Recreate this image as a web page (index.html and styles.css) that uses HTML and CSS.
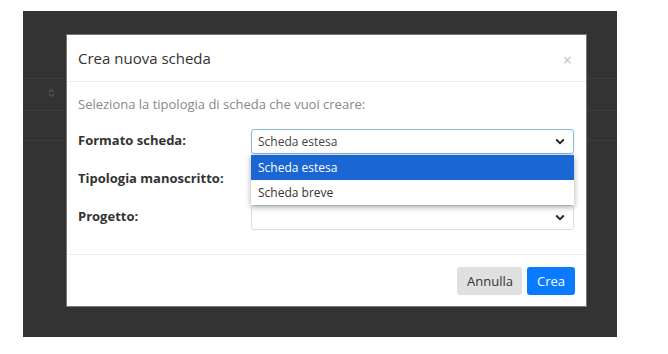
FILE: index.html
```html
<!DOCTYPE html>
<html lang="it">
<head>
    <meta charset="UTF-8">
    <meta name="viewport" content="width=device-width, initial-scale=1.0">
    <title>Crea nuova scheda</title>
    <link rel="stylesheet" href="styles.css">
</head>
<body>
    <div class="screen">
        <!-- Page behind the backdrop -->
        <div class="page">
            <div class="page-top"></div>
            <div class="page-row">
                <span class="sort-icon">
                    <svg width="7" height="10" viewBox="0 0 7 10"><path d="M1 4 L3.5 1.5 L6 4 M1 6 L3.5 8.5 L6 6" fill="none" stroke="#555" stroke-width="1.2"/></svg>
                </span>
            </div>
            <div class="page-row short"></div>
        </div>

        <!-- Modal -->
        <div class="modal">
            <div class="modal-header">
                <h4 class="modal-title">Crea nuova scheda</h4>
                <span class="close">&times;</span>
            </div>
            <div class="modal-body">
                <p class="hint">Seleziona la tipologia di scheda che vuoi creare:</p>

                <div class="form-row">
                    <label>Formato scheda:</label>
                    <div class="field">
                        <div class="select focused">
                            <span>Scheda estesa</span>
                            <svg class="chevron" width="10" height="7" viewBox="0 0 10 7"><path d="M1.2 1.5 L5 5.2 L8.8 1.5" fill="none" stroke="#222" stroke-width="1.8"/></svg>
                        </div>
                        <ul class="dropdown">
                            <li class="selected">Scheda estesa</li>
                            <li>Scheda breve</li>
                        </ul>
                    </div>
                </div>

                <div class="form-row">
                    <label>Tipologia manoscritto:</label>
                    <div class="field">
                        <div class="select"><span></span></div>
                    </div>
                </div>

                <div class="form-row">
                    <label>Progetto:</label>
                    <div class="field">
                        <div class="select">
                            <span></span>
                            <svg class="chevron" width="10" height="7" viewBox="0 0 10 7"><path d="M1.2 1.5 L5 5.2 L8.8 1.5" fill="none" stroke="#222" stroke-width="1.8"/></svg>
                        </div>
                    </div>
                </div>
            </div>
            <div class="modal-footer">
                <button class="btn btn-default">Annulla</button>
                <button class="btn btn-primary">Crea</button>
            </div>
        </div>
    </div>
</body>
</html>
```

FILE: styles.css
```css
body {
    margin: 0;
    background-color: #fff;
    font-family: 'Open Sans', 'Noto Sans', sans-serif;
}
.screen {
    position: relative;
    margin: 11px 0 0 23px;
    width: 594px;
    height: 326px;
    background-color: #333;
    overflow: hidden;
}
.page-top {
    height: 67px;
    border-bottom: 1px solid #3b3b3b;
}
.page-row {
    height: 31px;
    border-bottom: 1px solid #3b3b3b;
    position: relative;
}
.page-row.short {
    height: 29px;
}
.sort-icon {
    position: absolute;
    left: 25px;
    top: 9px;
    display: block;
    line-height: 0;
}
.modal {
    position: absolute;
    left: 43px;
    top: 23px;
    width: 519px;
    height: 271px;
    background-color: #fff;
    border: 1px solid #777;
    display: flex;
    flex-direction: column;
}
.modal-header {
    display: flex;
    justify-content: space-between;
    align-items: center;
    height: 46px;
    padding: 0 14px 0 11px;
    border-bottom: 1px solid #eee;
}
.modal-title {
    margin: 0;
    font-size: 15px;
    font-weight: 400;
    color: #333;
}
.close {
    color: #c4c4c4;
    font-size: 16px;
    margin-top: 4px;
}
.modal-body {
    flex: 1;
    padding: 0 12px 0 11px;
}
.hint {
    margin: 13px 0 16px;
    font-size: 13px;
    color: #888;
}
.form-row {
    display: grid;
    grid-template-columns: 173px 1fr;
    align-items: center;
    margin-bottom: 13px;
}
.form-row label {
    font-size: 13px;
    font-weight: 700;
    color: #333;
    margin-top: -4px;
}
.field {
    position: relative;
}
.select {
    display: flex;
    justify-content: space-between;
    align-items: center;
    height: 23px;
    padding: 0 8px 0 6px;
    border: 1px solid #ddd;
    border-radius: 3px;
    font-size: 12px;
    color: #444;
}
.select.focused {
    border-color: #8fb8d8;
    box-shadow: 0 1px 2px rgba(102, 175, 233, 0.3);
}
.dropdown {
    position: absolute;
    left: 0;
    right: 0;
    top: 26px;
    margin: 0;
    padding: 0;
    list-style: none;
    background-color: #fff;
    box-shadow: 0 2px 6px rgba(0, 0, 0, 0.35);
    z-index: 2;
}
.dropdown li {
    height: 25px;
    line-height: 25px;
    padding: 0 7px;
    font-size: 12px;
    color: #333;
}
.dropdown li.selected {
    background-color: #1a66d2;
    color: #fff;
}
.modal-footer {
    display: flex;
    justify-content: flex-end;
    gap: 5px;
    padding: 12px 11px 11px;
    border-top: 1px solid #eee;
}
.btn {
    height: 28px;
    padding: 0 9px 0 10px;
    border: none;
    border-radius: 3px;
    font-family: 'Open Sans', sans-serif;
    font-size: 13px;
}
.btn-default {
    background-color: #e0e0e0;
    color: #333;
}
.btn-primary {
    background-color: #0a7bff;
    color: #fff;
    padding: 0 10px;
}
```
